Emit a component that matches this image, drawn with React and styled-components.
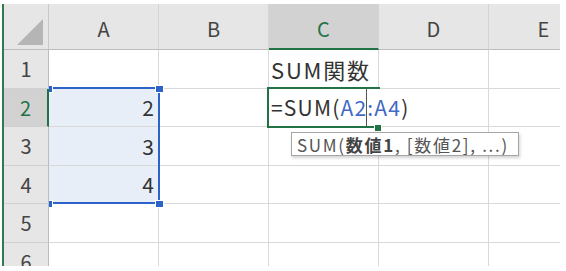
import React from 'react';
import styled, { createGlobalStyle } from 'styled-components';

const HEAD_W = 45;
const COL_W = 110;
const HEAD_H = 46;
const ROW_H = 38.5;

const colLeft = (i) => HEAD_W + COL_W * i;
const rowTop = (r) => HEAD_H + ROW_H * (r - 1);

const Global = createGlobalStyle`
  html, body {
    margin: 0;
    background: #fff;
  }
  body {
    font-family: "Noto Sans CJK JP", "Noto Sans", sans-serif;
  }
`;

const Page = styled.div`
  width: 566px;
  height: 271px;
  padding: 4px 0 0 2px;
  box-sizing: border-box;
  background: #fff;
`;

const Sheet = styled.div`
  position: relative;
  width: 556px;
  height: 262px;
  overflow: hidden;
  border-left: 2px solid #2f7d4f;
  display: grid;
  grid-template-columns: ${HEAD_W}px repeat(5, ${COL_W}px);
  grid-template-rows: ${HEAD_H}px repeat(6, ${ROW_H}px);
  background: #fff;
  color: #333;
`;

const Corner = styled.div`
  background: #e6e6e6;
  border-right: 1px solid #c9c9c9;
  border-bottom: 1px solid #bcbcbc;
  box-sizing: border-box;
  display: flex;
  align-items: flex-end;
  justify-content: flex-end;
  padding: 0 5px 4px 0;

  svg {
    display: block;
  }
`;

const ColHeader = styled.div`
  background: ${(p) => (p.$active ? '#d2d2d2' : '#e6e6e6')};
  color: ${(p) => (p.$active ? '#217346' : '#444')};
  border-right: 1px solid #d4d4d4;
  border-bottom: ${(p) => (p.$active ? '2px solid #217346' : '1px solid #bcbcbc')};
  box-sizing: border-box;
  display: flex;
  align-items: center;
  justify-content: center;
  font-size: 20px;
  padding-top: 4px;
`;

const RowHeader = styled.div`
  background: ${(p) => (p.$active ? '#d2d2d2' : '#e6e6e6')};
  color: ${(p) => (p.$active ? '#217346' : '#444')};
  border-right: ${(p) => (p.$active ? '2px solid #217346' : '1px solid #bcbcbc')};
  border-bottom: 1px solid #d0d0d0;
  box-sizing: border-box;
  display: flex;
  align-items: center;
  justify-content: center;
  font-size: 20px;
`;

const Cell = styled.div`
  position: relative;
  background: ${(p) => (p.$selected ? '#e7eef8' : '#fff')};
  border-right: 1px solid #d9d9d9;
  border-bottom: 1px solid #d9d9d9;
  box-sizing: border-box;
  display: flex;
  align-items: center;
  justify-content: ${(p) => (p.$right ? 'flex-end' : 'flex-start')};
  padding: 0 4px 0 2px;
  font-size: 21px;
  white-space: nowrap;
  color: #333;
`;

const Label = styled.span`
  font-size: 22px;
  letter-spacing: 1.8px;
`;

const EditText = styled.span`
  position: relative;
  z-index: 3;
  background: #fff;
  padding-right: 2px;
  letter-spacing: 1.2px;
  color: #333;
  height: 100%;
  display: flex;
  align-items: center;
`;

const Ref = styled.span`
  color: #4169c6;
`;

const RangeBox = styled.div`
  position: absolute;
  z-index: 4;
  left: ${colLeft(0)}px;
  top: ${rowTop(2) - 1.5}px;
  width: ${COL_W + 1}px;
  height: ${ROW_H * 3 + 1}px;
  border-top: 2px solid #2c63c9;
  border-right: 2px solid #2c63c9;
  border-bottom: 2px solid #2c63c9;
  box-sizing: border-box;
  pointer-events: none;
`;

const Handle = styled.div`
  position: absolute;
  z-index: 5;
  left: ${(p) => p.$x}px;
  top: ${(p) => p.$y}px;
  width: ${(p) => p.$w}px;
  height: 6px;
  background: #2c63c9;
  border: 1px solid #fff;
  border-left-width: ${(p) => (p.$w < 5 ? 0 : 1)}px;
`;

const ActiveBox = styled.div`
  position: absolute;
  z-index: 4;
  left: 263px;
  top: ${rowTop(2) - 2}px;
  width: 113px;
  height: 41px;
  border-top: 2px solid #217346;
  border-left: 2px solid #217346;
  box-sizing: border-box;

  &::after {
    content: '';
    position: absolute;
    left: -2px;
    bottom: 0;
    width: 108px;
    height: 2px;
    background: #217346;
  }
`;

const FillHandle = styled.div`
  position: absolute;
  z-index: 5;
  left: 370px;
  top: 120px;
  width: 6px;
  height: 6px;
  background: #217346;
  border: 1px solid #fff;
`;

const Caret = styled.div`
  position: absolute;
  z-index: 5;
  left: 362px;
  top: ${rowTop(2)}px;
  width: 1px;
  height: 38px;
  background: #555;
`;

const Tooltip = styled.div`
  position: absolute;
  z-index: 6;
  left: 287px;
  top: 128px;
  width: 228px;
  height: 24px;
  padding: 0 0 0 5px;
  box-sizing: border-box;
  display: flex;
  align-items: center;
  background: #fff;
  border: 1px solid #a6a6a6;
  box-shadow: 1px 2px 3px rgba(0, 0, 0, 0.18);
  font-size: 17px;
  letter-spacing: 1.7px;
  color: #555;
  white-space: nowrap;

  b {
    font-weight: 700;
    color: #444;
  }
`;

const COLS = ['A', 'B', 'C', 'D', 'E'];
const DATA = { 2: '2', 3: '3', 4: '4' };

function Row({ r }) {
  return (
    <>
      <RowHeader $active={r === 2}>{r}</RowHeader>
      {COLS.map((c, i) => {
        const selected = i === 0 && r >= 2 && r <= 4;
        if (i === 0) {
          return (
            <Cell key={c} $selected={selected} $right>
              {DATA[r] || ''}
            </Cell>
          );
        }
        if (c === 'C' && r === 1) {
          return (
            <Cell key={c}>
              <Label>SUM関数</Label>
            </Cell>
          );
        }
        if (c === 'C' && r === 2) {
          return (
            <Cell key={c}>
              <EditText>
                =SUM(<Ref>A2:A4</Ref>)
              </EditText>
            </Cell>
          );
        }
        return <Cell key={c} />;
      })}
    </>
  );
}

export default function App() {
  return (
    <Page>
      <Global />
      <Sheet>
        <Corner>
          <svg width="26" height="26" viewBox="0 0 26 26">
            <polygon points="26,0 26,26 0,26" fill="#b5b5b5" />
          </svg>
        </Corner>
        {COLS.map((c) => (
          <ColHeader key={c} $active={c === 'C'}>
            {c}
          </ColHeader>
        ))}
        {[1, 2, 3, 4, 5, 6].map((r) => (
          <Row key={r} r={r} />
        ))}

        <RangeBox />
        <Handle $x={colLeft(0)} $y={rowTop(2) - 4} $w={3} />
        <Handle $x={colLeft(1) - 4} $y={rowTop(2) - 4} $w={7} />
        <Handle $x={colLeft(0)} $y={rowTop(5) - 4} $w={3} />
        <Handle $x={colLeft(1) - 4} $y={rowTop(5) - 4} $w={7} />

        <ActiveBox />
        <FillHandle />
        <Caret />

        <Tooltip>
          SUM(<b>数値1</b>, [数値2], ...)
        </Tooltip>
      </Sheet>
    </Page>
  );
}
